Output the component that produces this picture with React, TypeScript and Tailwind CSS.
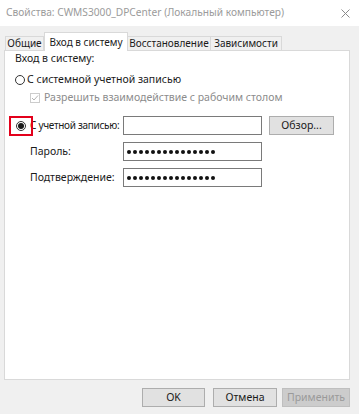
import React from "react";

const font = { fontFamily: '"Noto Sans", "Open Sans", sans-serif' };

function Radio({ checked }: { checked?: boolean }) {
  return (
    <span className="w-[10px] h-[10px] rounded-full border border-[#333333] bg-white flex items-center justify-center shrink-0">
      {checked && <span className="w-[6px] h-[6px] rounded-full bg-[#1a1a1a]" />}
    </span>
  );
}

function Field({ dots }: { dots?: boolean }) {
  return (
    <div className="w-[139px] h-[19px] shrink-0 border border-[#7a7a7a] bg-white flex items-center gap-[2px] pl-[3px] overflow-hidden">
      {dots &&
        Array.from({ length: 15 }).map((_, i) => (
          <span key={i} className="w-[4px] h-[4px] rounded-full bg-[#111111] shrink-0" />
        ))}
    </div>
  );
}

export default function App() {
  return (
    <div style={font} className="w-[359px] h-[414px] bg-[#f0f0f0] flex flex-col text-[10.5px] text-[#1a1a1a] overflow-hidden whitespace-nowrap">
      <div className="h-[26px] bg-white flex items-center justify-between pl-[6px] pr-[9px]">
        <span className="text-[#9b9b9b] text-[10.2px]">Свойства: CWMS3000_DPCenter (Локальный компьютер)</span>
        <svg width="9" height="9" viewBox="0 0 9 9">
          <path d="M0.5 0.5 L8.5 8.5 M8.5 0.5 L0.5 8.5" stroke="#8a8a8a" strokeWidth="1" />
        </svg>
      </div>

      <div className="flex items-end pl-[5px] mt-[6px] h-[18px] relative z-10 text-[10px]">
        <div className="w-[39px] h-[14px] border border-b-0 border-[#d9d9d9] bg-[#f0f0f0] flex items-center justify-center">Общие</div>
        <div className="w-[84px] h-[19px] -mb-[1px] border border-b-0 border-[#d9d9d9] bg-white flex items-center justify-center">Вход в систему</div>
        <div className="w-[83px] h-[14px] border border-b-0 border-l-0 border-[#d9d9d9] bg-[#f0f0f0] flex items-center justify-center">Восстановление</div>
        <div className="w-[71px] h-[14px] border border-b-0 border-l-0 border-[#d9d9d9] bg-[#f0f0f0] flex items-center justify-center">Зависимости</div>
      </div>

      <div className="mx-[4px] w-[346px] h-[330px] bg-white border border-[#d9d9d9] flex flex-col">
        <div className="h-[14px] mt-[1px] pl-[10px] flex items-center">Вход в систему:</div>

        <div className="h-[14px] mt-[7px] pl-[10px] flex items-center">
          <Radio />
          <span className="ml-[2px]">С системной учетной записью</span>
        </div>

        <div className="h-[14px] mt-[4px] pl-[25px] flex items-center">
          <span className="w-[10px] h-[10px] border border-[#cccccc] bg-white flex items-center justify-center">
            <svg width="8" height="8" viewBox="0 0 8 8">
              <path d="M1 4 L3 6 L7 1.5" stroke="#b3b3b3" strokeWidth="1" fill="none" />
            </svg>
          </span>
          <span className="ml-[4px] text-[#8c8c8c]">Разрешить взаимодействие с рабочим столом</span>
        </div>

        <div className="h-[19px] mt-[11px] pl-[11px] flex items-center">
          <span className="relative flex items-center shrink-0">
            <Radio checked />
            <span className="absolute -left-[7px] -top-[5px] w-[24px] h-[20px] border-2 border-[#e3001b]" />
          </span>
          <span className="ml-[4px] w-[93px] shrink-0 text-[10px] tracking-[-0.3px]">С учетной записью:</span>
          <Field />
          <button className="ml-[7px] w-[65px] h-[19px] shrink-0 border border-[#adadad] bg-[#e1e1e1] text-[10.5px] leading-none">Обзор...</button>
        </div>

        <div className="h-[19px] mt-[7px] pl-[25px] flex items-center">
          <span className="w-[93px] shrink-0">Пароль:</span>
          <Field dots />
        </div>

        <div className="h-[19px] mt-[7px] pl-[25px] flex items-center">
          <span className="w-[93px] shrink-0">Подтверждение:</span>
          <Field dots />
        </div>
      </div>

      <div className="flex justify-end pr-[9px] mt-[8px]">
        <button className="w-[63px] h-[19px] border border-[#adadad] bg-[#e1e1e1] text-[10.5px] leading-none">OK</button>
        <button className="ml-[8px] w-[64px] h-[19px] border border-[#adadad] bg-[#e1e1e1] text-[10.5px] leading-none">Отмена</button>
        <button className="ml-[5px] w-[68px] h-[19px] border border-[#bfbfbf] bg-[#cccccc] text-[#9a9a9a] text-[10.5px] leading-none">Применить</button>
      </div>
    </div>
  );
}
